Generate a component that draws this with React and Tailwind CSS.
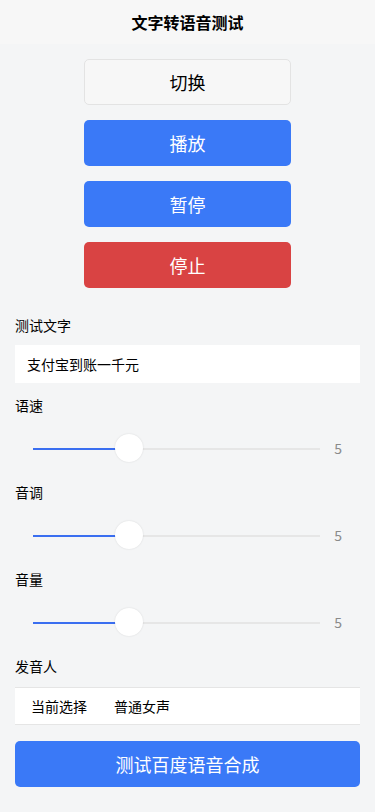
const font = { fontFamily: '"Noto Sans CJK SC", "Noto Sans", sans-serif' };

function Slider({ value }) {
  return (
    <div className="h-[67px] flex items-center pl-[33px] pr-[15px]">
      <div className="relative flex-1 h-[2px] bg-[#e6e6e6]">
        <div className="absolute left-0 top-0 h-[2px] w-[84px] bg-[#3a6ef0]" />
        <div className="absolute left-[82px] top-[-14px] w-[28px] h-[28px] rounded-full bg-white shadow-[0_0_2px_rgba(0,0,0,0.12)]" />
      </div>
      <div className="w-[40px] text-right pr-[18px] text-[14px] text-[#8a8a8a]">{value}</div>
    </div>
  );
}

export default function App() {
  return (
    <div className="min-h-screen bg-[#f4f5f6] text-black" style={font}>
      <div className="h-[44px] bg-[#f7f7f7] flex items-center justify-center text-[16px] font-bold">
        文字转语音测试
      </div>

      <div className="flex flex-col items-center gap-[15px] pt-[15px]">
        <button className="w-[207px] h-[46px] rounded-[5px] bg-[#f7f7f7] border border-[#e3e3e3] text-[18px] text-black">
          切换
        </button>
        <button className="w-[207px] h-[46px] rounded-[5px] bg-[#3a79f7] text-[18px] text-white">
          播放
        </button>
        <button className="w-[207px] h-[46px] rounded-[5px] bg-[#3a79f7] text-[18px] text-white">
          暂停
        </button>
        <button className="w-[207px] h-[46px] rounded-[5px] bg-[#d94343] text-[18px] text-white">
          停止
        </button>
      </div>

      <div className="px-[15px]">
        <div className="mt-[27px] h-[20px] leading-[20px] text-[14px]">测试文字</div>
        <div className="mt-[10px] h-[38px] bg-white flex items-center px-[12px] text-[14px]">
          支付宝到账一千元
        </div>

        <div className="mt-[12px] h-[20px] leading-[20px] text-[14px]">语速</div>
      </div>
      <Slider value={5} />
      <div className="px-[15px] h-[20px] leading-[20px] text-[14px]">音调</div>
      <Slider value={5} />
      <div className="px-[15px] h-[20px] leading-[20px] text-[14px]">音量</div>
      <Slider value={5} />

      <div className="px-[15px]">
        <div className="h-[20px] leading-[20px] text-[14px]">发音人</div>
        <div className="mt-[11px] h-[38px] bg-white border-y border-[#e5e5e5] flex items-center pl-[16px] text-[14px]">
          <span className="w-[83px]">当前选择</span>
          <span>普通女声</span>
        </div>
        <button className="mt-[16px] w-full h-[46px] rounded-[5px] bg-[#3a79f7] text-[18px] text-white">
          测试百度语音合成
        </button>
      </div>
    </div>
  );
}
